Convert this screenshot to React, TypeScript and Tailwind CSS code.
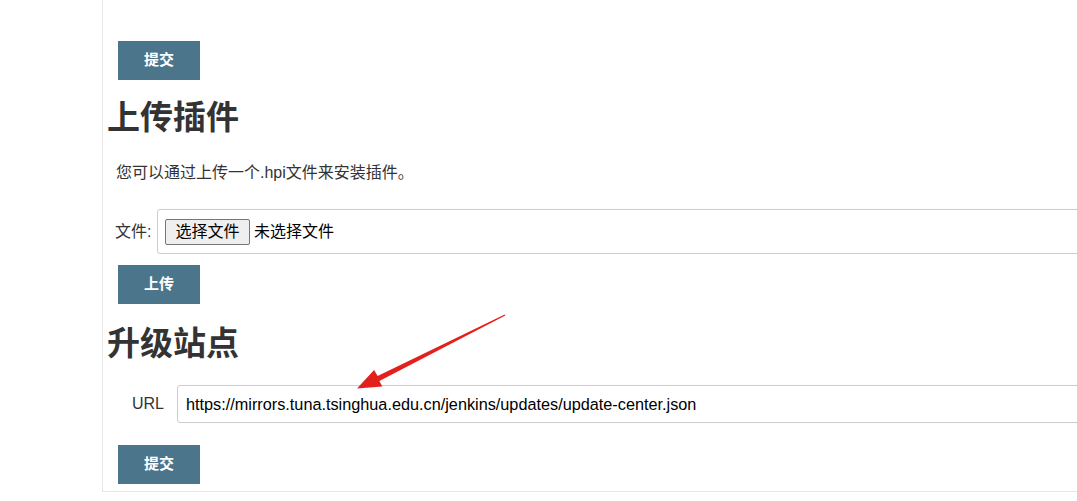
import React from "react";

const font = { fontFamily: '"Liberation Sans", "Noto Sans CJK SC", sans-serif' };

function Btn({ label }: { label: string }) {
  return (
    <button className="w-[82px] h-[39px] bg-[#4b758b] text-white text-[15px] font-bold flex items-center justify-center">
      {label}
    </button>
  );
}

export default function App() {
  return (
    <div className="relative w-[1077px] h-[501px] overflow-hidden bg-white text-[#333]" style={font}>
      <div className="ml-[102px] w-[1100px] h-[492px] border-l border-b border-[#e6e6e6] pl-[15px] pt-[41px]">
        <Btn label="提交" />
        <h1 className="-ml-[11px] mt-[18px] text-[33px] font-bold leading-[40px] text-[#333]">上传插件</h1>
        <p className="-ml-[2px] mt-[24px] text-[16px] leading-[22px] text-[#333]">您可以通过上传一个.hpi文件来安装插件。</p>
        <div className="mt-[25px] flex items-center">
          <span className="-ml-[3px] w-[42px] text-[16px] text-[#333]">文件:</span>
          <div className="flex-1 h-[45px] border border-[#cccccc] rounded-[3px] flex items-center pl-[7px]">
            <span className="h-[26px] w-[85px] bg-[#efefef] border border-[#767676] rounded-[2px] flex items-center justify-center text-[16px] text-black">
              选择文件
            </span>
            <span className="ml-[4px] text-[16px] text-black">未选择文件</span>
          </div>
        </div>
        <div className="mt-[11px]">
          <Btn label="上传" />
        </div>
        <h2 className="-ml-[11px] mt-[20px] text-[33px] font-bold leading-[40px] text-[#333]">升级站点</h2>
        <div className="mt-[21px] flex items-center">
          <span className="ml-[14px] w-[45px] text-[16px] text-[#333]">URL</span>
          <div className="flex-1 h-[38px] border border-[#cccccc] rounded-[3px] flex items-center pl-[8px] text-[16.25px] text-black">
            https://mirrors.tuna.tsinghua.edu.cn/jenkins/updates/update-center.json
          </div>
        </div>
        <div className="mt-[22px]">
          <Btn label="提交" />
        </div>
      </div>
      <svg className="absolute left-0 top-0 pointer-events-none" width="1077" height="501">
        <polygon
          points="504.7,314.4 377.6,376.0 374.1,370.0 357,388.5 382.3,386.4 379.4,381.0 505.3,315.6"
          fill="#e3201b"
        />
      </svg>
    </div>
  );
}
